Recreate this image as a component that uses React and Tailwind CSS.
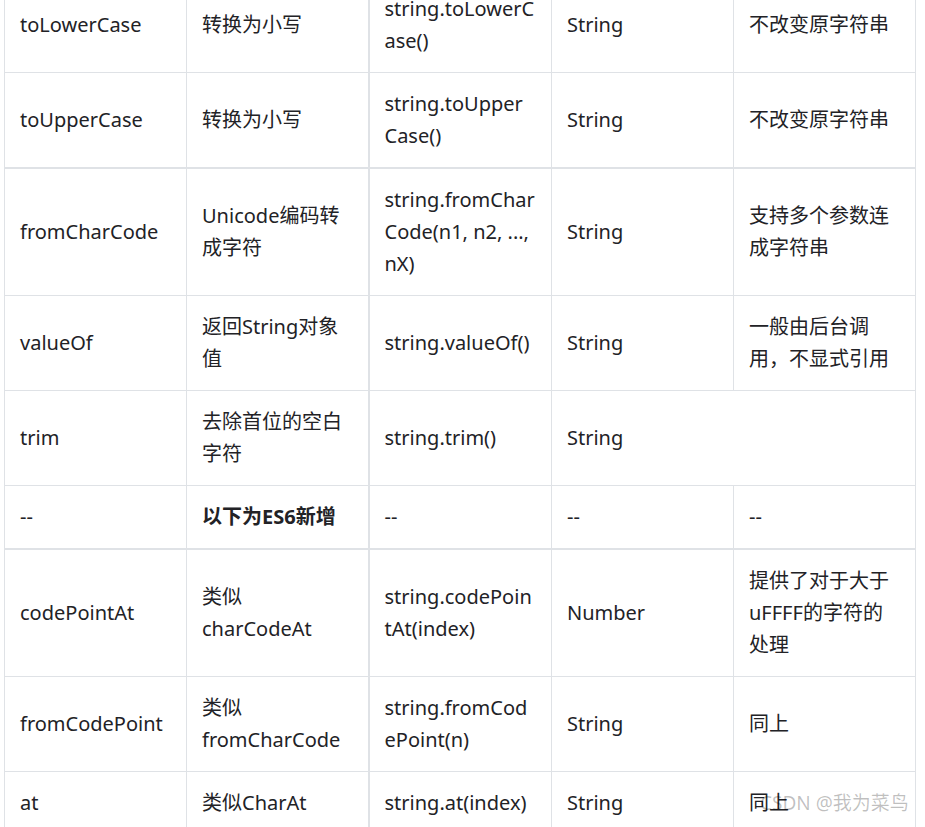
import React from "react";

const rows = [
  { cells: [["toLowerCase"], ["转换为小写"], ["string.toLowerC", "ase()"], ["String"], ["不改变原字符串"]] },
  { cells: [["toUpperCase"], ["转换为小写"], ["string.toUpper", "Case()"], ["String"], ["不改变原字符串"]], thick: true },
  { cells: [["fromCharCode"], ["Unicode编码转", "成字符"], ["string.fromChar", "Code(n1, n2, ...,", "nX)"], ["String"], ["支持多个参数连", "成字符串"]] },
  { cells: [["valueOf"], ["返回String对象", "值"], ["string.valueOf()"], ["String"], ["一般由后台调", "用，不显式引用"]] },
  { cells: [["trim"], ["去除首位的空白", "字符"], ["string.trim()"], ["String"]], span: true },
  { cells: [["--"], ["以下为ES6新增"], ["--"], ["--"], ["--"]], bold: true, thick: true },
  { cells: [["codePointAt"], ["类似", "charCodeAt"], ["string.codePoin", "tAt(index)"], ["Number"], ["提供了对于大于", "uFFFF的字符的", "处理"]] },
  { cells: [["fromCodePoint"], ["类似", "fromCharCode"], ["string.fromCod", "ePoint(n)"], ["String"], ["同上"]] },
  { cells: [["at"], ["类似CharAt"], ["string.at(index)"], ["String"], ["同上"]] },
];

const Cell = ({ lines, col, bold, thick, span }) => (
  <td
    colSpan={span ? 2 : 1}
    className={`border-[#dfe2e6] px-[15px] py-[15px] align-middle whitespace-nowrap ${
      thick ? "border-t border-x border-b-2" : "border"
    } ${col === 1 ? "border-r-2" : ""} ${bold && col === 1 ? "font-bold" : ""}`}
  >
    {lines.map((line, i) => (
      <React.Fragment key={i}>
        {i > 0 && <br />}
        {line}
      </React.Fragment>
    ))}
  </td>
);

export default function App() {
  return (
    <div
      className="relative w-[925px] h-[827px] overflow-hidden bg-white text-[#222226] text-[20px] leading-[32px]"
      style={{ fontFamily: '"Noto Sans", "Noto Sans CJK SC", sans-serif' }}
    >
      <div className="pl-1 -mt-[23px]">
        <table className="w-[911px] table-fixed border-collapse">
          <colgroup>
            <col className="w-[182px]" />
            <col className="w-[182px]" />
            <col className="w-[183px]" />
            <col className="w-[182px]" />
            <col className="w-[182px]" />
          </colgroup>
          <tbody>
            {rows.map((row, r) => (
              <tr key={r}>
                {row.cells.map((lines, c) => (
                  <Cell
                    key={c}
                    lines={lines}
                    col={c}
                    bold={row.bold}
                    thick={row.thick}
                    span={row.span && c === 3}
                  />
                ))}
              </tr>
            ))}
          </tbody>
        </table>
      </div>

      {/* watermark */}
      <div className="absolute left-[760px] top-[790px] text-[19px] leading-[26px] text-black/25 pointer-events-none whitespace-nowrap">
        CSDN @我为菜鸟
      </div>
    </div>
  );
}
